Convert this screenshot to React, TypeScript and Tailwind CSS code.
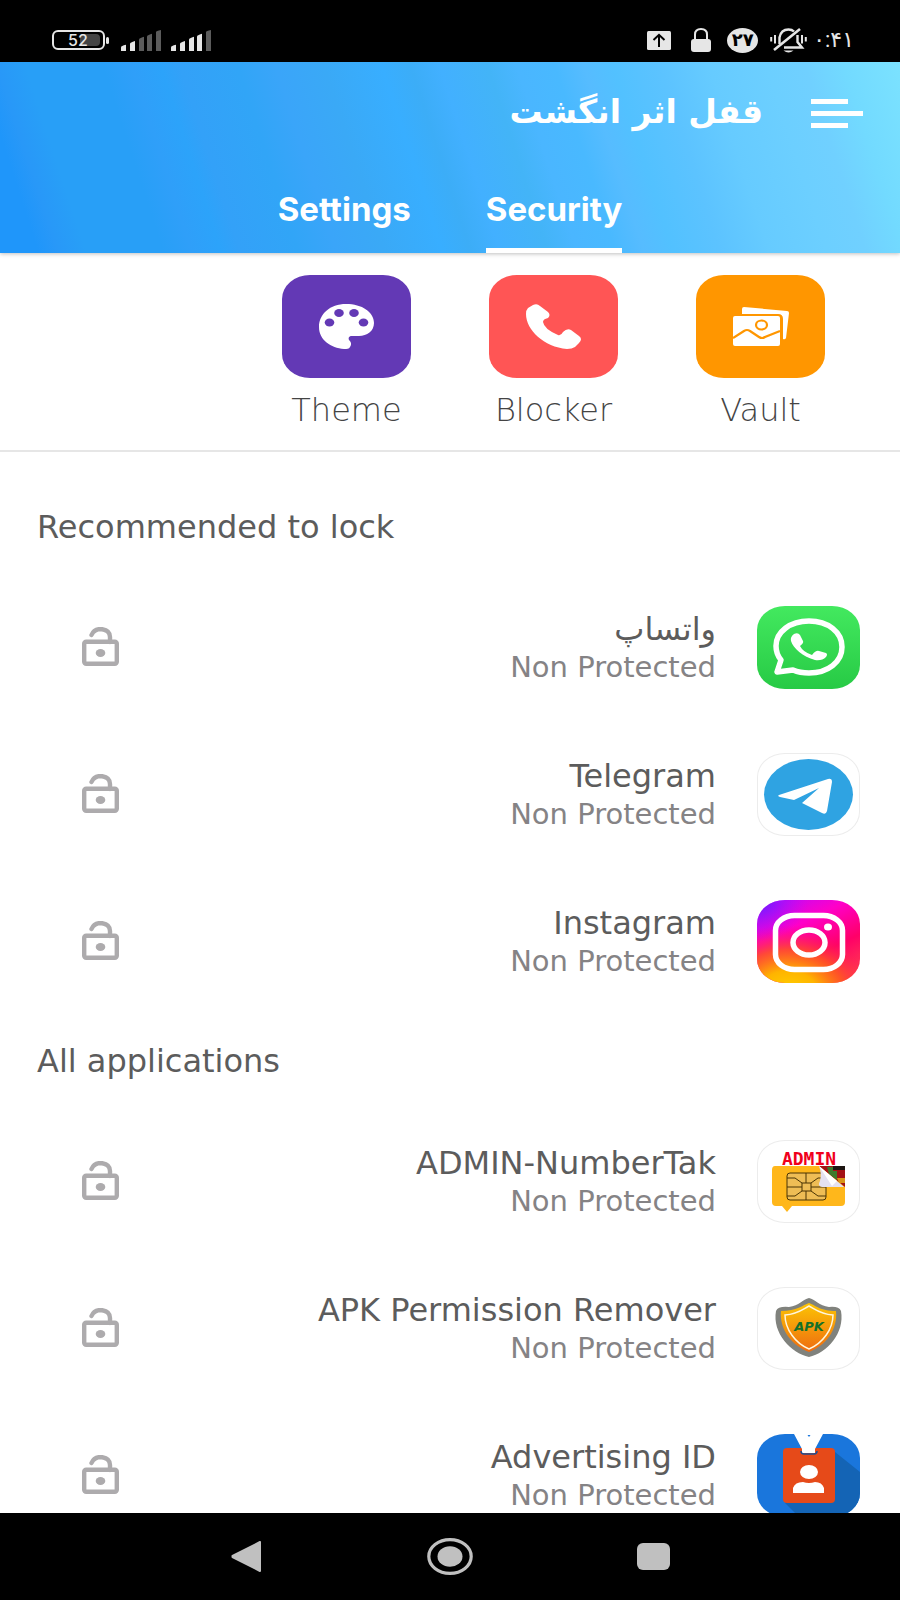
import React from "react";

const BARS = [
  "M0 16.5Q0 15 5 14V20H0Z",
  "M9 13Q9 12 14 10.5V20H9Z",
  "M18 9Q18 8 23 6.500V20H18Z",
  "M26 6Q26 5 31 3.500V20H26Z",
  "M35 2Q35 1 40 0V20H35Z",
];

const SignalIcon: React.FC<{ level: number }> = ({ level }) => (
  <svg className="h-[21px] w-10" viewBox="0 0 40 20" preserveAspectRatio="none">
    {BARS.map((d, i) => (
      <path key={d} d={d} fill={i < level ? "#e6e6e6" : "#5c5c5c"} />
    ))}
  </svg>
);

const StatusBar: React.FC = () => (
  <div className="flex h-[62px] shrink-0 items-center justify-between bg-black pt-[18px] pr-[46px] pl-[52px] font-['Roboto','DejaVu_Sans',sans-serif] text-[#e6e6e6]">
    <div className="flex items-center">
      <div className="relative flex h-5 w-[53px] items-center rounded-md border-2 border-[#e6e6e6] p-[3px] font-['Inter',sans-serif] text-[16px] leading-none font-medium">
        <span className="ml-[23px] h-3 w-[21px] rounded-sm bg-[#444]" />
        <span className="absolute left-[14px]">52</span>
      </div>
      <span className="ml-px h-[7px] w-[3px] rounded-full bg-[#e6e6e6]" />
      <div className="ml-3 flex gap-[10px]">
        <SignalIcon level={2} />
        <SignalIcon level={4} />
      </div>
    </div>
    <div className="flex items-center">
      <svg className="h-[19px] w-6" viewBox="0 0 24 19">
        <rect width="24" height="19" rx="1.500" fill="#e6e6e6" />
        <path d="M12 16V4M6.500 9L12 3.800L17.500 9" stroke="#000" strokeWidth="2" fill="none" />
      </svg>
      <svg className="ml-5 h-6 w-5" viewBox="0 0 20 24">
        <path d="M4 12V6.500Q4 1 10 1T16 6.500V12" stroke="#e6e6e6" strokeWidth="2" fill="none" />
        <rect y="11" width="20" height="13" rx="3" fill="#e6e6e6" />
      </svg>
      <span className="ml-4 flex h-[25px] w-[31px] items-center justify-center rounded-[50%] bg-[#e6e6e6] text-[18px] leading-none font-bold text-black">
        ۲۷
      </span>
      <svg className="ml-3 h-[25px] w-[37px]" viewBox="0 0 37 25" fill="none" stroke="#e6e6e6" strokeWidth="2.400">
        <path d="M9.500 16V9.500Q11 1.500 18.500 1.500Q22 1.500 24 3.500M27.500 7V14L32 19.500H14" />
        <path d="M4 22L30 1" strokeWidth="2.600" />
        <path d="M1.200 9V13.500M5 7V15.500M32 7V15.500M35.800 9V13.500" strokeWidth="2" />
        <path d="M13.500 22.500H23.500Q18.500 26.500 13.500 22.500Z" fill="#e6e6e6" stroke="none" />
      </svg>
      <span dir="ltr" className="ml-1.5 text-[22px] leading-none">
        ۰:۴۱
      </span>
    </div>
  </div>
);

const Header: React.FC = () => (
  <header className="relative z-10 shrink-0 bg-[linear-gradient(72deg,#1f96fa_4%,#2898f8_6%,#289ff7_9%,#289ff7_17%,#2f9ff9_20%,#2ca3fa_23%,#33a1f8_25%,#31a5f7_31%,#3aa5f9_35%,#3aa9f6_40%,#38aeff_46%,#3cadf7_49%,#42b0ff_52%,#43b4f7_57%,#4ab6ff_60%,#49b9ff_64%,#56bcff_67%,#52c1ff_70%,#5cc3ff_75%,#66cbff_80%,#6ccfff_86%,#70d0ff_90%,#72daff_94%,#7be2ff_100%)] text-white shadow-[0_1px_4px_rgba(0,0,0,0.25)]">
    <div className="flex h-[103px] items-center justify-end gap-12 pr-[37px]">
      <h1 dir="rtl" className="pb-1 font-['DejaVu_Sans',sans-serif] text-[33px] leading-[48px] font-bold">
        قفل اثر انگشت
      </h1>
      <button aria-label="Menu" className="flex w-[52px] flex-col gap-[7px]">
        <span className="h-[5px] w-[37px] bg-white" />
        <span className="h-[5px] w-full bg-white" />
        <span className="h-[5px] w-[37px] bg-white" />
      </button>
    </div>
    <nav className="flex h-[88px] justify-center gap-[75px] font-['Inter',sans-serif] text-[33px] font-bold">
      <button className="border-y-[5px] border-transparent pt-[2px]">Settings</button>
      <button className="border-y-[5px] border-transparent border-b-white pt-[2px]">Security</button>
    </nav>
  </header>
);

const PaletteIcon = () => (
  <svg className="h-[45px] w-[55px]" viewBox="0 0 55 45">
    <path
      d="M27 0C43 0 55 8 55 19C55 27 48 32 40 32H33C30 32 29 34 30 36C32 38 33 40 31 43C30 45 28 45 25 45C12 44 0 36 0 23C0 10 11 0 27 0Z"
      fill="#fff"
    />
    <g fill="#6339b5">
      <ellipse cx="10.500" cy="18.500" rx="4.800" ry="4" />
      <ellipse cx="20" cy="9" rx="4.800" ry="4" />
      <ellipse cx="35" cy="9" rx="4.800" ry="4" />
      <ellipse cx="44.500" cy="18.500" rx="4.800" ry="4" />
    </g>
  </svg>
);

const PhoneIcon = () => (
  <svg className="h-[45px] w-[55px]" viewBox="0 0 55 45" fill="#fff">
    <path d="M2 4L7 1Q11-1 14 2L22 8Q25 11 22 14Q17 15 17 18Q18 25 32 31Q35 32 37 28Q41 24 45 26L53 32Q57 35 53 39L49 43Q46 45 41 45C18 43 0 26 0 10Q0 6 2 4Z" />
  </svg>
);

const VaultIcon = () => (
  <svg className="h-[39px] w-[56px]" viewBox="0 0 56 39" fill="#fff">
    <path d="M9 7V2Q9 0 11 0L54 4Q56 4 56 6L53 31Q52 33 50 32V12Q50 7 45 7Z" />
    <rect y="9" width="47" height="30" rx="2" />
    <g fill="none" stroke="#ff9600" strokeWidth="2.200">
      <path d="M0 31L11 24Q14 22 17 24L26 30Q29 32 32 30L47 24" />
      <ellipse cx="28.500" cy="18" rx="5.500" ry="4.500" />
    </g>
  </svg>
);

const tools = [
  { label: "Theme", color: "bg-[#6339b5]", icon: <PaletteIcon /> },
  { label: "Blocker", color: "bg-[#ff5555]", icon: <PhoneIcon /> },
  { label: "Vault", color: "bg-[#ff9600]", icon: <VaultIcon /> },
];

const WhatsAppIcon = () => (
  <svg className="h-full w-full" viewBox="0 0 103 83">
    <defs>
      <linearGradient id="wa" x2="0" y2="1">
        <stop stopColor="#43e95f" />
        <stop offset="1" stopColor="#27ca45" />
      </linearGradient>
    </defs>
    <rect width="103" height="83" fill="url(#wa)" />
    <path
      d="M20 66L24 54Q19 48 19 40C19 26 33 15 52 15S85 26 85 41S71 67 52 67Q43 67 36 64Z"
      fill="none"
      stroke="#fff"
      strokeWidth="5.500"
      strokeLinejoin="round"
    />
    <path
      d="M37 28Q41 26 43 29L46 35Q47 37 43 40Q46 46 55 49Q59 44 62 45L69 47Q71 48 69 51Q65 55 58 54C46 51 36 42 34 35Q33 31 37 28Z"
      fill="#fff"
    />
  </svg>
);

const TelegramIcon = () => (
  <svg className="h-full w-full" viewBox="0 0 103 83">
    <ellipse cx="51.500" cy="41.500" rx="44.500" ry="35.500" fill="#2fa3e2" />
    <path
      d="M22 42L71 26Q75 25 75 29L70 58Q69 62 65 60L45 50L62 35L37 47L23 44Q20 43 22 42Z"
      fill="#fff"
    />
  </svg>
);

const InstagramIcon = () => (
  <svg className="h-full w-full" viewBox="0 0 103 83">
    <defs>
      <linearGradient id="igBase" x1="0.100" y1="0" x2="0.700" y2="1">
        <stop stopColor="#b80cff" />
        <stop offset="0.350" stopColor="#ff00c8" />
        <stop offset="0.700" stopColor="#ff0068" />
        <stop offset="1" stopColor="#ff3a50" />
      </linearGradient>
      <radialGradient id="igWarm" cx="0.300" cy="1.150" r="0.850">
        <stop stopColor="#ffd600" />
        <stop offset="0.350" stopColor="#ffb400" />
        <stop offset="0.650" stopColor="#ff5a1c" stopOpacity="0.800" />
        <stop offset="1" stopColor="#ff0068" stopOpacity="0" />
      </radialGradient>
      <radialGradient id="igCool" cx="0" cy="0" r="0.500">
        <stop stopColor="#5b20ff" />
        <stop offset="1" stopColor="#b80cff" stopOpacity="0" />
      </radialGradient>
    </defs>
    <rect width="103" height="83" fill="url(#igBase)" />
    <rect width="103" height="83" fill="url(#igWarm)" />
    <rect width="103" height="83" fill="url(#igCool)" />
    <g fill="none" stroke="#fff" strokeWidth="5.500">
      <rect x="18.500" y="15.500" width="67" height="54" rx="19" ry="15" />
      <ellipse cx="52" cy="42.500" rx="16" ry="12.500" />
    </g>
    <ellipse cx="71" cy="27" rx="4" ry="3.500" fill="#fff" />
  </svg>
);

const AdminIcon = () => (
  <svg className="h-full w-full" viewBox="0 0 103 83">
    <text
      x="52"
      y="25"
      textAnchor="middle"
      fontFamily="DejaVu Sans Mono"
      fontWeight="bold"
      fontSize="18"
      fill="#f0001c"
    >
      ADMIN
    </text>
    <path d="M18 26H84Q88 26 88 30V62Q88 66 84 66H35L30 72L25 66H19Q15 66 15 62V30Q15 26 18 26Z" fill="#ffb71b" />
    <rect x="30" y="33" width="39" height="27" rx="3" fill="#eebd55" stroke="#4a3505" />
    <path
      d="M30 38H38L45 43V51L38 56H30M69 38H61L54 43V51L61 56H69M45 43H54M45 51H54M30 47H45M54 47H69M49 33V43M49 51V60"
      fill="none"
      stroke="#4a3505"
    />
    <path d="M62 26H88V47Z" fill="#a31215" />
    <path d="M70 27H76V31H80V40L72 34Z" fill="#3d7a2c" />
    <path d="M76 26H88V30H76Z" fill="#1d1512" />
    <path d="M80 38H88V43H82Z" fill="#d99518" />
    <path d="M62 26L87 47H65Q60 46 63 41Q65 34 62 26Z" fill="#e4e1f0" />
    <path d="M62 26L75 46L80 41Z" fill="#fff" />
  </svg>
);

const ApkIcon = () => (
  <svg className="h-full w-full" viewBox="0 0 103 83">
    <defs>
      <linearGradient id="apk" x2="0" y2="1">
        <stop stopColor="#fcc404" />
        <stop offset="1" stopColor="#ee6b10" />
      </linearGradient>
    </defs>
    <path
      d="M52 11C58 12 62 19 72 20Q82 19 84 24C88 46 70 66 52 70C34 66 15 46 19 24Q21 19 32 20C42 19 46 12 52 11Z"
      fill="#80827d"
    />
    <path
      d="M52 16C58 18 63 24 79 24C81 43 68 59 52 65C36 59 22 43 24 24C40 24 46 18 52 16Z"
      fill="url(#apk)"
    />
    <path
      d="M52 19C58 22 63 27 76 28C76 42 66 56 52 62C38 56 28 42 28 28C41 27 46 22 52 19Z"
      fill="none"
      stroke="#fff5dc"
      strokeWidth="1.500"
    />
    <text
      x="52"
      y="44"
      textAnchor="middle"
      fontFamily="DejaVu Sans"
      fontWeight="bold"
      fontStyle="italic"
      fontSize="13"
      fill="#15702a"
    >
      APK
    </text>
  </svg>
);

const AdvertisingIcon = () => (
  <svg className="h-full w-full" viewBox="0 0 103 83">
    <rect width="103" height="83" fill="#1a76dc" />
    <path d="M78 18L103 38V83H42L28 69Z" fill="#1464b5" />
    <rect x="26" y="14" width="52" height="55" rx="4" fill="#e64a19" />
    <path d="M37 0H66L58 15V19H45V15Z" fill="#fff" />
    <path d="M44 17Q44 20 47 20H57Q60 20 60 17" fill="none" stroke="#1d4f93" strokeWidth="1.500" />
    <path d="M50.500 1H53.500L52 3Z" fill="#1a76dc" />
    <ellipse cx="52" cy="38" rx="9" ry="7" fill="#fff" />
    <path d="M36 59V54Q38 48 46 48Q52 50 58 48Q65 48 67 54V59Z" fill="#fff" />
  </svg>
);

const UnlockIcon = () => (
  <svg className="h-[39px] w-[37px]" viewBox="0 0 37 39" fill="none" stroke="#adabad" strokeWidth="4.400">
    <path d="M9.500 8Q12 2 19 2Q28 3 28 10V15" strokeLinecap="round" />
    <rect x="2.200" y="14.800" width="32.600" height="22" rx="2" />
    <ellipse cx="18.500" cy="26" rx="4.800" ry="4" fill="#adabad" stroke="none" />
  </svg>
);

type App = { name: string; icon: React.ReactNode; framed?: boolean };

const recommended: App[] = [
  { name: "واتساپ", icon: <WhatsAppIcon /> },
  { name: "Telegram", icon: <TelegramIcon />, framed: true },
  { name: "Instagram", icon: <InstagramIcon /> },
];

const allApps: App[] = [
  { name: "ADMIN-NumberTak", icon: <AdminIcon />, framed: true },
  { name: "APK Permission Remover", icon: <ApkIcon />, framed: true },
  { name: "Advertising ID", icon: <AdvertisingIcon /> },
];

const AppRow: React.FC<{ app: App }> = ({ app }) => (
  <li className="flex h-[147px] items-center pr-10 pl-[82px]">
    <button aria-label={`Lock ${app.name}`} className="pb-[2px]">
      <UnlockIcon />
    </button>
    <div className="ml-auto text-right">
      <p className="text-[32px] leading-[38px] text-[#5c5c5c]">{app.name}</p>
      <p className="text-[29px] leading-[38px] text-[#858385]">Non Protected</p>
    </div>
    <div
      className={`ml-[41px] h-[83px] w-[103px] overflow-hidden rounded-[28px/24px] ${
        app.framed ? "ring-1 ring-[#ececec] ring-inset" : ""
      }`}
    >
      {app.icon}
    </div>
  </li>
);

const AppSection: React.FC<{ title: string; apps: App[] }> = ({ title, apps }) => (
  <section>
    <h2 className="px-[37px] text-[32px] leading-[93px] text-[#5c5c5c]">{title}</h2>
    <ul>
      {apps.map((app) => (
        <AppRow key={app.name} app={app} />
      ))}
    </ul>
  </section>
);

const NavBar: React.FC = () => (
  <footer className="flex h-[87px] shrink-0 items-center justify-center gap-[164px] bg-black">
    <button aria-label="Back">
      <svg className="h-[31px] w-8" viewBox="0 0 32 31">
        <path d="M1.500 15L29 1V30L1.500 16Z" fill="#c0c0c0" stroke="#c0c0c0" strokeWidth="2" strokeLinejoin="round" />
      </svg>
    </button>
    <button aria-label="Home">
      <svg className="h-[37px] w-[46px]" viewBox="0 0 46 37" fill="#c0c0c0">
        <ellipse cx="23" cy="18.500" rx="21.200" ry="16.800" fill="none" stroke="#c0c0c0" strokeWidth="3.200" />
        <ellipse cx="23" cy="18.500" rx="12.500" ry="10.200" />
      </svg>
    </button>
    <button aria-label="Recent apps" className="h-[27px] w-[33px] rounded-md bg-[#c0c0c0]" />
  </footer>
);

const App: React.FC = () => {
  return (
    <div className="flex h-screen flex-col bg-white font-['DejaVu_Sans',sans-serif]">
      <StatusBar />
      <Header />
      <main className="flex-1 overflow-y-auto [scrollbar-width:none]">
        <div className="mb-[29px] flex h-[199px] justify-end gap-[78px] border-b-2 border-[#e6e6e6] pt-[22px] pr-[75px]">
          {tools.map((tool) => (
            <button key={tool.label} className="flex w-[129px] flex-col items-center">
              <span className={`flex h-[103px] w-full items-center justify-center rounded-[28px/24px] ${tool.color}`}>
                {tool.icon}
              </span>
              <span className="mt-3 text-[32px] leading-10 font-extralight text-[#444]">{tool.label}</span>
            </button>
          ))}
        </div>
        <AppSection title="Recommended to lock" apps={recommended} />
        <AppSection title="All applications" apps={allApps} />
      </main>
      <NavBar />
    </div>
  );
};

export default App;
